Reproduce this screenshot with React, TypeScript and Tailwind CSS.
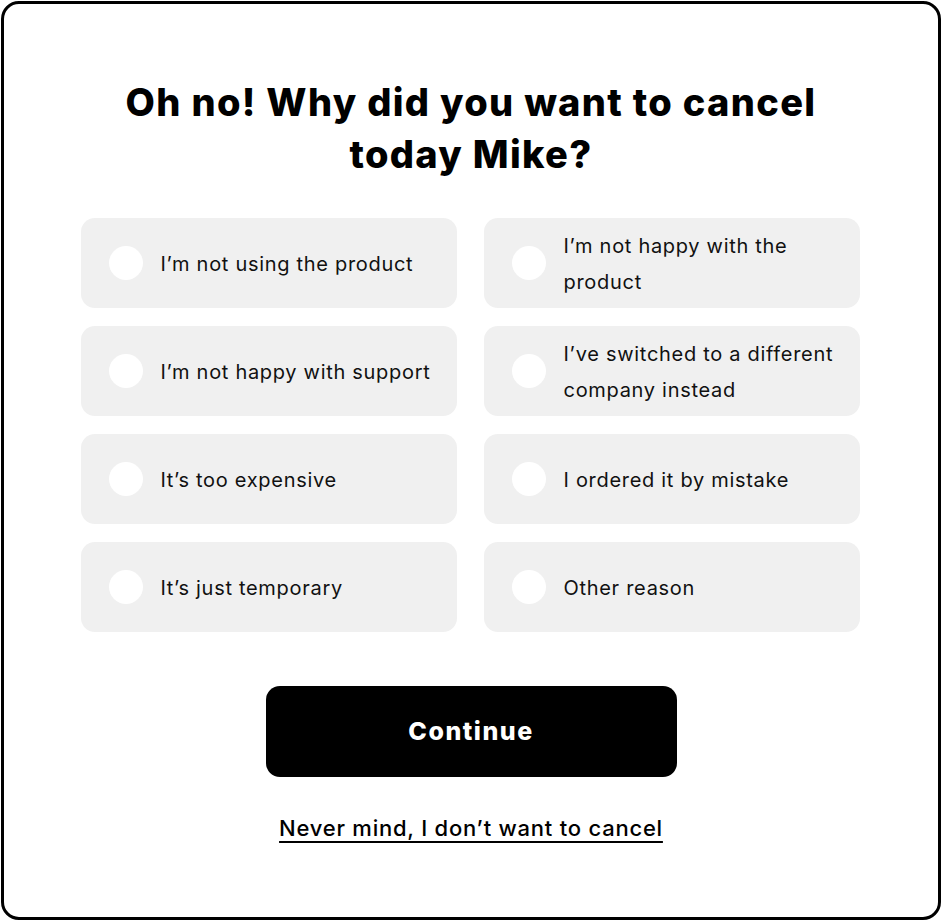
import React from 'react';

const reasons = [
  "I’m not using the product",
  "I’m not happy with the product",
  "I’m not happy with support",
  "I’ve switched to a different company instead",
  "It’s too expensive",
  "I ordered it by mistake",
  "It’s just temporary",
  "Other reason",
];

export default function App() {
  const [picked, setPicked] = React.useState<number | null>(null);

  return (
    <div className="w-[942px] h-[921px] p-px bg-white" style={{ fontFamily: 'Inter, "Noto Sans", sans-serif' }}>
      <div className="h-full w-full border-[3px] border-black rounded-[18px] bg-white flex flex-col items-center pt-[72px]">
        {/* Heading */}
        <h1 className="text-[38px] leading-[52px] font-extrabold text-black text-center tracking-[0.035em] w-[740px]">
          Oh no! Why did you want to cancel today Mike?
        </h1>

        {/* Options */}
        <div className="grid grid-cols-2 gap-x-[27px] gap-y-[18px] mt-[38px] w-[779px] -translate-x-[1px]">
          {reasons.map((r, i) => (
            <button
              key={r}
              onClick={() => setPicked(i)}
              className="h-[90px] rounded-[14px] bg-[#f0f0f0] flex items-center pl-[28px] pr-5 text-left"
            >
              <span className="shrink-0 w-[34px] h-[34px] rounded-full bg-white flex items-center justify-center">
                {picked === i && <span className="w-[14px] h-[14px] rounded-full bg-black" />}
              </span>
              <span className="ml-[18px] text-[20px] leading-[36px] tracking-[0.035em] text-[#111] translate-y-[1px]">{r}</span>
            </button>
          ))}
        </div>

        {/* Actions */}
        <button className="mt-[54px] w-[411px] h-[91px] rounded-[14px] bg-black text-white text-[25px] font-extrabold tracking-[0.06em]">
          Continue
        </button>
        <a className="mt-[36px] text-[22px] leading-[30px] font-medium tracking-[0.035em] text-black underline decoration-2 underline-offset-[5px]">
          Never mind, I don’t want to cancel
        </a>
      </div>
    </div>
  );
}
